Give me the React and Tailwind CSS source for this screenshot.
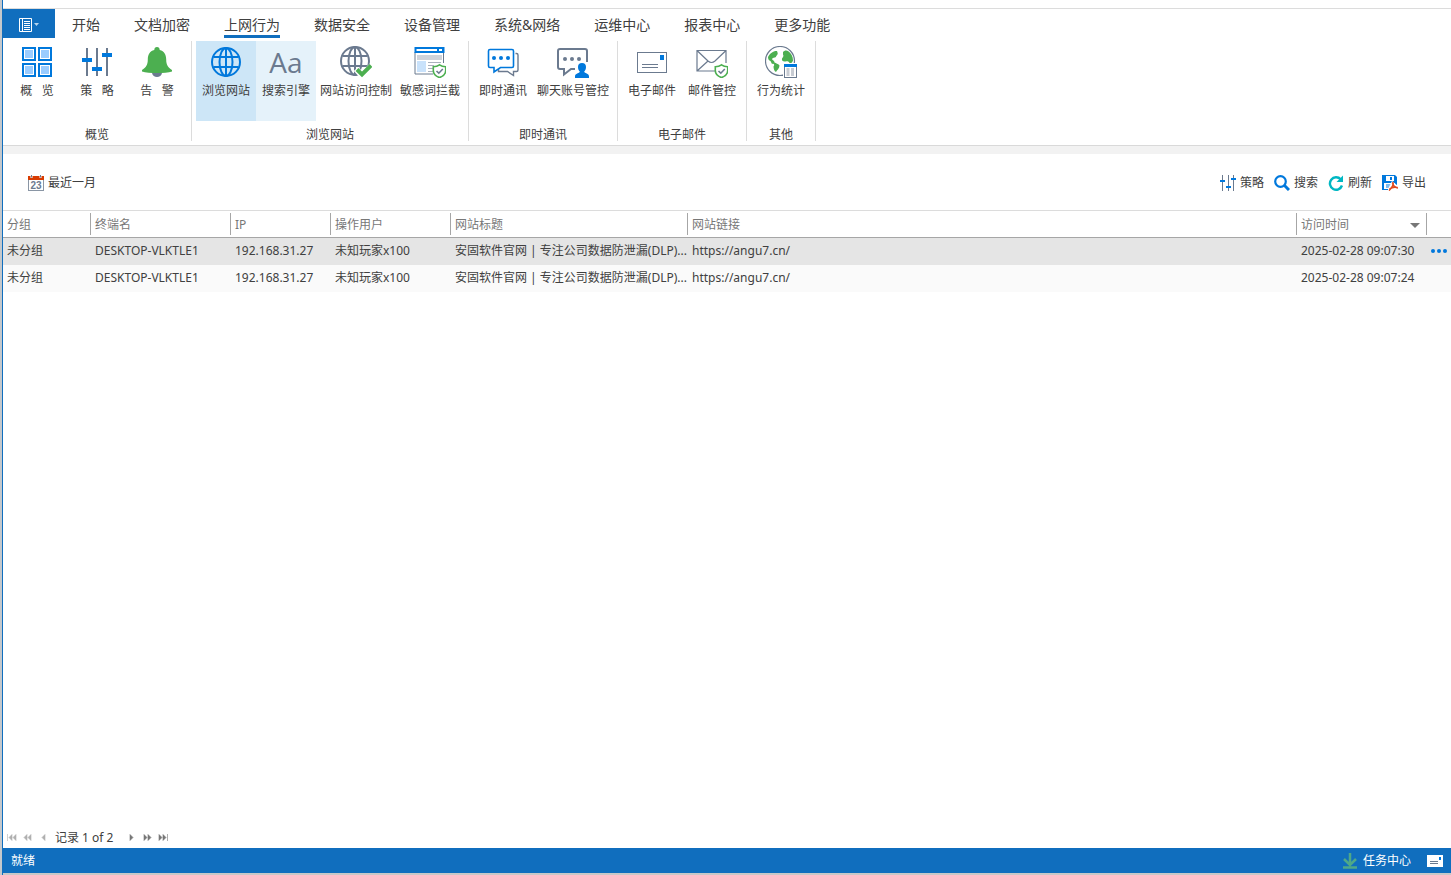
import React, { useState } from "react";

const SLATE = "#6b7a8f";
const BLUE = "#0078dc";
const GREEN = "#4caf50";

const Icon = ({ children, className = "w-8 h-8", box = 32 }) => (
  <svg className={className} viewBox={`0 0 ${box} ${box}`} fill="none" aria-hidden="true">
    {children}
  </svg>
);

const Shield = ({ x, y }) => (
  <g transform={`translate(${x} ${y})`}>
    <path
      d="M7 0.8C5.3 2.1 3.2 2.7 0.8 2.7V6.5C0.8 10 3.5 12.3 7 13.6C10.5 12.3 13.2 10 13.2 6.5V2.7C10.8 2.7 8.7 2.1 7 0.8Z"
      fill="#fff"
      stroke={GREEN}
      strokeWidth="1.6"
    />
    <path d="M4 7L6.3 9.2L10.3 5" stroke={SLATE} strokeWidth="1.6" />
  </g>
);

const GridIcon = () => (
  <Icon>
    {[
      [2, 2],
      [18, 2],
      [2, 18],
      [18, 18],
    ].map(([x, y]) => (
      <g key={`${x}-${y}`}>
        <rect x={x} y={y} width="12" height="12" fill="#99ccff" stroke={BLUE} strokeWidth="2" />
        <rect x={x + 1.5} y={y + 1.5} width="9" height="9" stroke="#fff" />
      </g>
    ))}
  </Icon>
);

const SlidersIcon = () => (
  <Icon>
    <path d="M6 2V12M6 16V30M16 2V21M16 25V30M26 2V7M26 11V30" stroke={SLATE} strokeWidth="2" />
    <path d="M1 14H11M11 23H21M21 9H31" stroke={BLUE} strokeWidth="4" />
  </Icon>
);

const SmallSlidersIcon = () => (
  <Icon className="h-4 w-4" box={16}>
    <path d="M2.5 0V16M8.5 0V16M13.5 0V16" stroke={SLATE} />
    <path d="M0 6H5M6 12H11M11 4H16" stroke={BLUE} strokeWidth="2" />
  </Icon>
);

const BellIcon = () => (
  <Icon>
    <path d="M11 27H21C20.5 29.8 18.5 31 16 31C13.5 31 11.5 29.8 11 27Z" fill={SLATE} />
    <path
      d="M16 1C14.3 1 13.3 2.2 13.3 4C8.6 5.2 6.8 9 6.8 13.5C6.8 19 5 21.3 1 24V25.5C4.5 26.7 10 27 16 27C22 27 27.5 26.7 31 25.5V24C27 21.3 25.2 19 25.2 13.5C25.2 9 23.4 5.2 18.7 4C18.7 2.2 17.7 1 16 1Z"
      fill={GREEN}
    />
  </Icon>
);

const Globe = ({ color }) => (
  <g stroke={color} strokeWidth="2">
    <circle cx="16" cy="16" r="14" />
    <ellipse cx="16" cy="16" rx="6.5" ry="14" />
    <path d="M16 2V30M3.5 11H28.5M3.5 21H28.5" />
  </g>
);

const GlobeIcon = () => (
  <Icon>
    <Globe color={BLUE} />
  </Icon>
);

const FontIcon = () => (
  <span className="flex h-8 items-center font-['Open_Sans'] text-[28px] leading-8 text-[#6b7a8f]">
    Aa
  </span>
);

const GlobeCheckIcon = () => (
  <Icon>
    <g transform="translate(-1 -1)">
      <Globe color={SLATE} />
    </g>
    <path d="M16 23L22 29.5L32 19.5" stroke="#fff" strokeWidth="6" />
    <path d="M17 23.5L22 28.5L31 19.5" stroke={GREEN} strokeWidth="4" />
  </Icon>
);

const WindowShieldIcon = () => (
  <Icon>
    <path d="M1 6V28H19M29.5 6V17" stroke={SLATE} />
    <rect x="0.5" y="1" width="30" height="6" fill={BLUE} />
    <path d="M2.5 4H23M25 4H28" stroke="#fff" strokeWidth="2" />
    <rect x="3" y="9" width="25" height="5" fill="#cfd3da" />
    <rect x="3" y="15" width="9" height="11" fill="#c9e2fb" />
    <path d="M14 16.5H27M14 19.5H20M14 22.5H19M14 25.5H19" stroke="#aab1bd" />
    <Shield x={18.5} y={18} />
  </Icon>
);

const ChatIcon = () => (
  <Icon>
    <path
      d="M28.5 7.5H29.5Q31 7.5 31 9V24Q31 25.5 29.5 25.5H26.5V29.5L20.5 25.5H11.5V23"
      stroke={SLATE}
      strokeWidth="1.4"
    />
    <path
      d="M3 3.5H25Q26.5 3.5 26.5 5V20Q26.5 21.5 25 21.5H13.5L7 26V21.5H3Q1.5 21.5 1.5 20V5Q1.5 3.5 3 3.5Z"
      fill="#fff"
      stroke={BLUE}
      strokeWidth="1.6"
    />
    <g fill={BLUE}>
      <circle cx="7" cy="12" r="2" />
      <circle cx="14" cy="12" r="2" />
      <circle cx="21" cy="12" r="2" />
    </g>
  </Icon>
);

const ChatUserIcon = () => (
  <Icon>
    <path
      d="M30 16V5Q30 3 28 3H3Q1 3 1 5V21Q1 23 3 23H7V28.5L14 23H18"
      stroke={SLATE}
      strokeWidth="2"
    />
    <g fill={SLATE}>
      <circle cx="8" cy="13" r="2" />
      <circle cx="15" cy="13" r="2" />
      <circle cx="22" cy="13" r="2" />
    </g>
    <path
      d="M25 17C22.3 17 21 18.5 21 21C21 23 21.800 24.500 22.800 25.500C22.500 27.500 18 27 18 30.500V32H32V30.500C32 27 27.500 27.500 27.200 25.500C28.200 24.500 29 23 29 21C29 18.500 27.700 17 25 17Z"
      fill={BLUE}
    />
  </Icon>
);

const MailCardIcon = () => (
  <Icon>
    <rect x="1.5" y="6.5" width="29" height="20" stroke={SLATE} />
    <path d="M6 18.5H22M6 21.5H22" stroke={SLATE} />
    <rect x="24" y="9" width="4" height="5" fill={BLUE} />
  </Icon>
);

const MailShieldIcon = () => (
  <Icon>
    <path
      d="M30 17V4.5H1V25H19M1 4.5L12 15Q15.5 18 19 15L30 4.5M1 25L12 15"
      stroke={SLATE}
      strokeWidth="1.2"
    />
    <Shield x={18.5} y={18} />
  </Icon>
);

const EarthIcon = () => (
  <Icon>
    <circle cx="15" cy="15" r="14.5" stroke={SLATE} strokeWidth="1.2" />
    <path
      d="M12 5C9 4.5 5 7 3 11C3 13.5 4 14.5 5.5 15L7 18C9 17 10 19 8.5 20.5C8.5 23 9.5 25.5 11 26C12 24 14.5 22.5 14.5 19.5C13 17.5 11 17.5 9.5 16.5C9.5 14.5 7.5 14.5 7 13C7.5 11.5 9.5 12 11 11C11 9.5 13.5 8.5 12.5 6.5Z"
      fill={GREEN}
    />
    <path
      d="M18 6C19 4.5 21.5 4 23 5C26 7 28 10.5 28 14.5C27.5 16.5 26 17.5 24.5 17C24 15.5 22.5 15 20.5 15.5C18 16 16.5 14.5 17 12.5C18 11 19 10 18 8.5Z"
      fill={GREEN}
    />
    <rect x="18" y="17" width="14" height="15" fill="#fff" />
    <rect x="19.5" y="18.5" width="12" height="13" fill="#fff" stroke={SLATE} />
    <rect x="19" y="18" width="13" height="3" fill={BLUE} />
    <path d="M23 22V30M27.5 22V30" stroke="#c8ccd3" strokeWidth="3" />
  </Icon>
);

const CalendarIcon = () => (
  <svg className="h-4 w-4" viewBox="0 0 16 16" aria-hidden="true">
    <rect x="0.5" y="1.5" width="15" height="14" fill="#fff" stroke="#8a96a5" />
    <path d="M0 1H16V5H0Z" fill="#d83b01" />
    <path d="M3.5 0V3M12.5 0V3" stroke="#fff" strokeWidth="2" />
    <path d="M3.5 0V2.5M12.5 0V2.5" stroke="#6b7a8f" />
    <text
      x="8"
      y="14"
      fontSize="10"
      fontWeight="700"
      textAnchor="middle"
      fill="#6b7a8f"
      fontFamily="Liberation Sans, sans-serif"
    >
      23
    </text>
  </svg>
);

const SearchIcon = () => (
  <Icon className="h-4 w-4" box={16}>
    <circle cx="6.5" cy="6.5" r="5.3" stroke={BLUE} strokeWidth="2.2" />
    <path d="M10.3 10.3L15 15" stroke={BLUE} strokeWidth="3" />
  </Icon>
);

const RefreshIcon = () => (
  <Icon className="h-4 w-4" box={16}>
    <path d="M12.7 4.3A6.2 6.2 0 1 0 14 10.5" stroke="#00b7c3" strokeWidth="2.4" />
    <path d="M15 0.5V7H8.5Z" fill="#00b7c3" />
  </Icon>
);

const ExportIcon = () => (
  <Icon className="h-4 w-4" box={16}>
    <path d="M0 0H13L15 2V15H0Z" fill={BLUE} />
    <path d="M4 1H12V6H4Z" fill="#fff" />
    <path d="M8 2H10V5H8Z" fill={BLUE} />
    <path d="M2 8H13V14H2Z" fill="#fff" />
    <path d="M4 10H9M4 12H8" stroke={BLUE} />
    <path d="M10 6L16 11V16H6V14Z" fill="#fff" />
    <path
      d="M10.5 7C12 8.5 11 12 7 15.5M10.5 8C11 10.5 13 12.5 16 13M7.5 14C9.5 12.5 13 12 15.5 12.5"
      stroke="#e04a1f"
      strokeWidth="1.6"
    />
  </Icon>
);

const tabs = [
  "开始",
  "文档加密",
  "上网行为",
  "数据安全",
  "设备管理",
  "系统&网络",
  "运维中心",
  "报表中心",
  "更多功能",
];

const groups = [
  {
    title: "概览",
    items: [
      { label: "概   览", icon: GridIcon },
      { label: "策   略", icon: SlidersIcon },
      { label: "告   警", icon: BellIcon },
    ],
  },
  {
    title: "浏览网站",
    items: [
      { label: "浏览网站", icon: GlobeIcon, bg: "bg-[#cde6f7]" },
      { label: "搜索引擎", icon: FontIcon, bg: "bg-[#e5f2fa]" },
      { label: "网站访问控制", icon: GlobeCheckIcon },
      { label: "敏感词拦截", icon: WindowShieldIcon },
    ],
  },
  {
    title: "即时通讯",
    items: [
      { label: "即时通讯", icon: ChatIcon },
      { label: "聊天账号管控", icon: ChatUserIcon },
    ],
  },
  {
    title: "电子邮件",
    items: [
      { label: "电子邮件", icon: MailCardIcon },
      { label: "邮件管控", icon: MailShieldIcon },
    ],
  },
  { title: "其他", items: [{ label: "行为统计", icon: EarthIcon }] },
];

const actions = [
  { label: "策略", icon: SmallSlidersIcon },
  { label: "搜索", icon: SearchIcon },
  { label: "刷新", icon: RefreshIcon },
  { label: "导出", icon: ExportIcon },
];

const columns = [
  { title: "分组", width: "w-[88px]" },
  { title: "终端名", width: "w-[140px]" },
  { title: "IP", width: "w-[100px]" },
  { title: "操作用户", width: "w-[120px]" },
  { title: "网站标题", width: "w-[237px]" },
  { title: "网站链接", width: "" },
  { title: "访问时间", width: "w-[130px]", sorted: true },
];

const visit = {
  group: "未分组",
  host: "DESKTOP-VLKTLE1",
  ip: "192.168.31.27",
  user: "未知玩家x100",
  title: "安固软件官网 | 专注公司数据防泄漏(DLP)...",
  url: "https://angu7.cn/",
};

const rows = [
  { ...visit, time: "2025-02-28 09:07:30" },
  { ...visit, time: "2025-02-28 09:07:24" },
];

const pagerShapes = {
  first: "M1.5 1V8M6 1.5V7.5L3 4.5ZM10 1.5V7.5L7 4.5Z",
  prevPage: "M5 1.5V7.5L2 4.5ZM9 1.5V7.5L6 4.5Z",
  prev: "M7 1.5V7.5L4 4.5Z",
  next: "M4 1.5V7.5L7 4.5Z",
  nextPage: "M2 1.5V7.5L5 4.5ZM6 1.5V7.5L9 4.5Z",
  last: "M1 1.5V7.5L4 4.5ZM5 1.5V7.5L8 4.5ZM9.5 1V8",
};

const PagerButton = ({ name, title, disabled }) => (
  <button type="button" aria-label={title} disabled={disabled} className="flex w-4 justify-center">
    <svg className="h-[9px] w-[11px]" viewBox="0 0 11 9" aria-hidden="true">
      <path
        d={pagerShapes[name]}
        fill={disabled ? "#b0b0b0" : "#777"}
        stroke={disabled ? "#b0b0b0" : "#777"}
        strokeWidth="0.6"
      />
    </svg>
  </button>
);

const Ribbon = () => (
  <div className="flex border-b border-[#d9d9d9] pt-[3px] pb-1">
    {groups.map((group) => (
      <section
        key={group.title}
        className="flex flex-col items-center border-r border-[#dcdcdc] px-1"
      >
        <div className="flex">
          {group.items.map(({ label, icon: GroupIcon, bg }) => (
            <button
              type="button"
              key={label}
              className={`flex h-20 min-w-[60px] flex-col items-center px-1 pt-[5px] ${bg || ""}`}
            >
              <GroupIcon />
              <span className="mt-[5px] text-xs leading-4 whitespace-pre">{label}</span>
            </button>
          ))}
        </div>
        <h2 className="pt-2 text-xs leading-3">{group.title}</h2>
      </section>
    ))}
  </div>
);

const VisitTable = () => (
  <table className="w-full table-fixed border-collapse text-left text-xs">
    <thead>
      <tr className="h-[27px] border-t border-t-[#dcdcdc] border-b border-b-[#a6a6a6] text-[#777]">
        {columns.map((col) => (
          <th key={col.title} className={`p-0 font-normal ${col.width}`}>
            <div className="flex h-[22px] items-center justify-between border-r border-[#a6a6a6] pt-0.5 pr-1.5 pl-1">
              {col.title}
              {col.sorted && (
                <svg className="h-[5px] w-[10px]" viewBox="0 0 10 5" aria-hidden="true">
                  <path d="M0 0H10L5 5Z" fill="#777" />
                </svg>
              )}
            </div>
          </th>
        ))}
        <th className="w-6 p-0" aria-label="操作" />
      </tr>
    </thead>
    <tbody>
      {rows.map((row, idx) => (
        <tr key={row.time} className={`h-[27px] ${idx === 0 ? "bg-[#e5e5e5]" : "bg-[#fafafa]"}`}>
          <td className="px-1 py-0">{row.group}</td>
          <td className="px-1 py-0">{row.host}</td>
          <td className="px-1 py-0">{row.ip}</td>
          <td className="px-1 py-0">{row.user}</td>
          <td className="py-0 pr-0 pl-1 whitespace-nowrap">{row.title}</td>
          <td className="px-1 py-0">
            <a href={row.url}>{row.url}</a>
          </td>
          <td className="px-1 py-0 whitespace-nowrap">{row.time}</td>
          <td className="px-1 py-0">
            {idx === 0 && (
              <button type="button" aria-label="更多" className="flex gap-0.5">
                <span className="h-1 w-1 rounded-full bg-[#0078dc]" />
                <span className="h-1 w-1 rounded-full bg-[#0078dc]" />
                <span className="h-1 w-1 rounded-full bg-[#0078dc]" />
              </button>
            )}
          </td>
        </tr>
      ))}
    </tbody>
  </table>
);

export default function App() {
  const [activeTab, setActiveTab] = useState("上网行为");

  return (
    <div className="flex min-h-screen bg-white font-['Noto_Sans','Noto_Sans_CJK_SC',sans-serif] text-[#404040]">
      <div className="w-[3px] shrink-0 border-r border-[#106ebe] bg-[#c4c8cc]" />
      <div className="flex min-w-0 flex-1 flex-col">
        <div className="h-2" />
        <nav className="flex h-[30px] border-t border-[#dcdcdc]">
          <button
            type="button"
            aria-label="文件"
            className="flex w-[52px] items-center justify-center gap-0.5 bg-[#106ebe] pt-0.5"
          >
            <svg className="h-3.5 w-[13px]" viewBox="0 0 13 14" fill="none" aria-hidden="true">
              <path
                d="M0.5 0.5H12.5V13.5H0.5ZM3.5 0.5V13.5M5 3.5H11M5 5.5H11M5 7.5H11M5 9.5H11M5 11.5H11"
                stroke="#fff"
              />
            </svg>
            <svg className="h-[3px] w-[5px]" viewBox="0 0 5 3" aria-hidden="true">
              <path d="M0 0H5L2.5 3Z" fill="#b7d4ec" />
            </svg>
          </button>
          {tabs.map((tab) => (
            <button
              type="button"
              key={tab}
              onClick={() => setActiveTab(tab)}
              className="flex px-[17px] text-sm leading-5"
            >
              <span
                className={`flex h-full items-center border-b-3 pt-1.5 ${
                  tab === activeTab ? "border-[#106ebe]" : "border-transparent"
                }`}
              >
                {tab}
              </span>
            </button>
          ))}
        </nav>
        <Ribbon />
        <div className="h-2 bg-[#f2f2f2]" />
        <div className="flex h-14 items-center justify-between px-[25px] pt-px text-xs leading-4">
          <button type="button" className="flex items-center gap-1">
            <CalendarIcon />
            最近一月
          </button>
          <div className="flex gap-2.5">
            {actions.map(({ label, icon: ActionIcon }) => (
              <button type="button" key={label} className="flex items-center gap-1">
                <ActionIcon />
                {label}
              </button>
            ))}
          </div>
        </div>
        <main className="flex-1">
          <VisitTable />
        </main>
        <div className="flex h-[22px] items-center text-xs">
          <PagerButton name="first" title="第一页" disabled />
          <PagerButton name="prevPage" title="上一页" disabled />
          <PagerButton name="prev" title="上一条" disabled />
          <span className="pt-0.5 pr-2.5 pl-1">记录 1 of 2</span>
          <PagerButton name="next" title="下一条" />
          <PagerButton name="nextPage" title="下一页" />
          <PagerButton name="last" title="最后一页" />
        </div>
        <footer className="flex h-[27px] items-center justify-between border-b-2 border-[#c8c8c8] bg-[#106ebe] px-2 text-xs text-white">
          <span>就绪</span>
          <div className="flex items-center gap-4">
            <button type="button" className="flex items-center gap-1.5">
              <svg className="h-4 w-3.5" viewBox="0 0 14 16" fill="none" aria-hidden="true">
                <path d="M7 0V12M1 6L7 12L13 6M0 14.5H14" stroke="#4fa888" strokeWidth="2.5" />
              </svg>
              任务中心
            </button>
            <button type="button" aria-label="消息">
              <svg className="h-3 w-4" viewBox="0 0 16 12" aria-hidden="true">
                <rect width="16" height="12" fill="#fff" />
                <path d="M3 6.5H11M3 8.5H11" stroke="#6b7a8f" />
                <rect x="12" y="2" width="2" height="3" fill="#0078dc" />
              </svg>
            </button>
          </div>
        </footer>
      </div>
    </div>
  );
}
